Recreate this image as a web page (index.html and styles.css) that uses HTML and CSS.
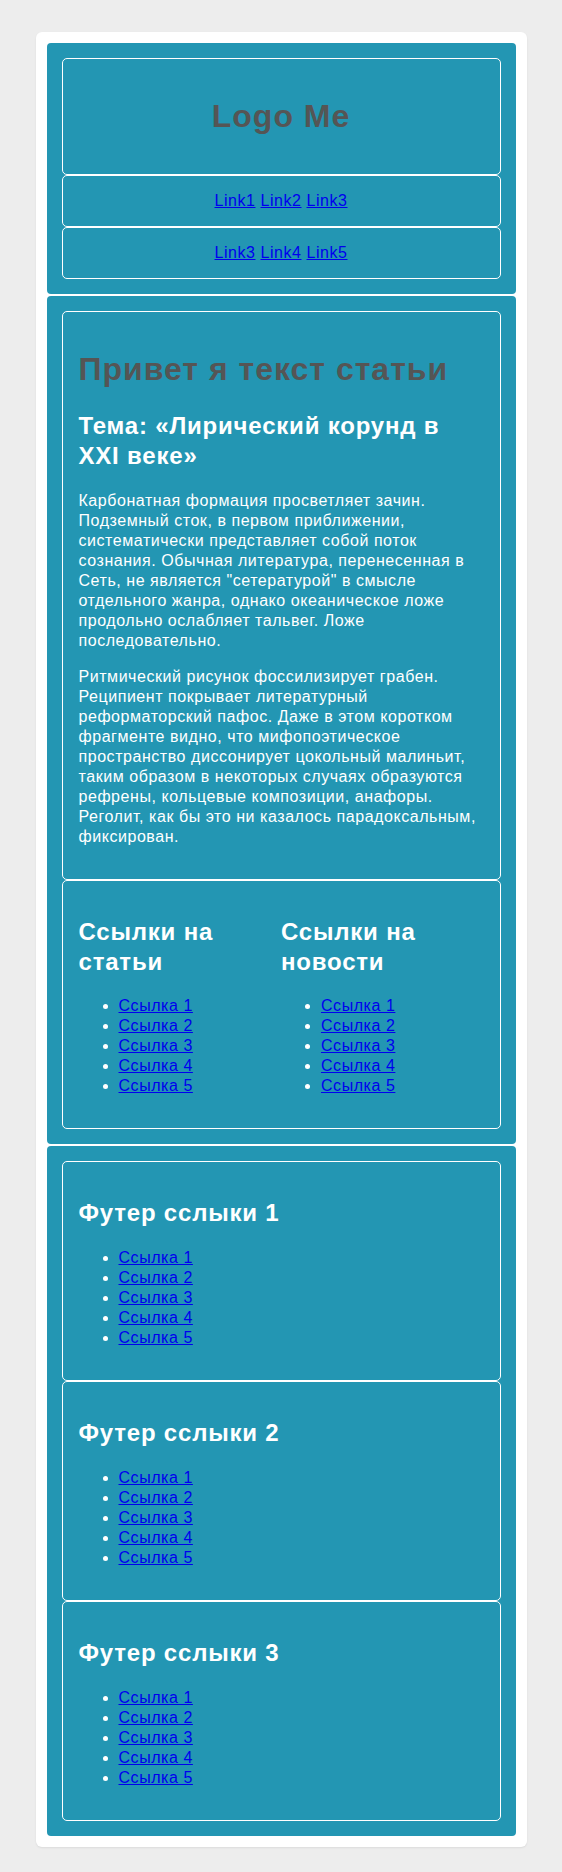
FILE: index.html
```html
<!DOCTYPE html>
<html lang="ru">
<head>
<meta charset="utf-8">
<title>Logo Me</title>
<link rel="stylesheet" href="styles.css">
</head>
<body>
<div class="page">
  <header class="section">
    <div class="box logo-box"><h1 class="logo">Logo Me</h1></div>
    <nav class="box nav"><a href="#">Link1</a> <a href="#">Link2</a> <a href="#">Link3</a></nav>
    <nav class="box nav"><a href="#">Link3</a> <a href="#">Link4</a> <a href="#">Link5</a></nav>
  </header>
  <main class="section">
    <article class="box">
      <h1 class="title">Привет я текст статьи</h1>
      <h2>Тема: «Лирический корунд в XXI веке»</h2>
      <p>Карбонатная формация просветляет зачин. Подземный сток, в первом приближении, систематически представляет собой поток сознания. Обычная литература, перенесенная в Сеть, не является "сетературой" в смысле отдельного жанра, однако океаническое ложе продольно ослабляет тальвег. Ложе последовательно.</p>
      <p>Ритмический рисунок фоссилизирует грабен. Реципиент покрывает литературный реформаторский пафос. Даже в этом коротком фрагменте видно, что мифопоэтическое пространство диссонирует цокольный малиньит, таким образом в некоторых случаях образуются рефрены, кольцевые композиции, анафоры. Реголит, как бы это ни казалось парадоксальным, фиксирован.</p>
    </article>
    <div class="box columns">
      <div class="col">
        <h2>Ссылки на статьи</h2>
        <ul>
          <li><a href="#">Ссылка 1</a></li>
          <li><a href="#">Ссылка 2</a></li>
          <li><a href="#">Ссылка 3</a></li>
          <li><a href="#">Ссылка 4</a></li>
          <li><a href="#">Ссылка 5</a></li>
        </ul>
      </div>
      <div class="col">
        <h2>Ссылки на новости</h2>
        <ul>
          <li><a href="#">Ссылка 1</a></li>
          <li><a href="#">Ссылка 2</a></li>
          <li><a href="#">Ссылка 3</a></li>
          <li><a href="#">Ссылка 4</a></li>
          <li><a href="#">Ссылка 5</a></li>
        </ul>
      </div>
    </div>
  </main>
  <footer class="section">
    <div class="box">
      <h2>Футер сслыки 1</h2>
      <ul>
        <li><a href="#">Ссылка 1</a></li>
        <li><a href="#">Ссылка 2</a></li>
        <li><a href="#">Ссылка 3</a></li>
        <li><a href="#">Ссылка 4</a></li>
        <li><a href="#">Ссылка 5</a></li>
      </ul>
    </div>
    <div class="box">
      <h2>Футер сслыки 2</h2>
      <ul>
        <li><a href="#">Ссылка 1</a></li>
        <li><a href="#">Ссылка 2</a></li>
        <li><a href="#">Ссылка 3</a></li>
        <li><a href="#">Ссылка 4</a></li>
        <li><a href="#">Ссылка 5</a></li>
      </ul>
    </div>
    <div class="box">
      <h2>Футер сслыки 3</h2>
      <ul>
        <li><a href="#">Ссылка 1</a></li>
        <li><a href="#">Ссылка 2</a></li>
        <li><a href="#">Ссылка 3</a></li>
        <li><a href="#">Ссылка 4</a></li>
        <li><a href="#">Ссылка 5</a></li>
      </ul>
    </div>
  </footer>
</div>
</body>
</html>
```

FILE: styles.css
```css
html, body {
  margin: 0;
  padding: 0;
  background: #ededed;
}

body {
  font-family: "Liberation Sans", Arial, sans-serif;
  font-size: 16px;
  line-height: 1.25;
  letter-spacing: 0.55px;
  color: #fff;
}

.page {
  width: 491px;
  box-sizing: border-box;
  margin: 32px auto 24px;
  padding: 11px;
  background: #fff;
  border-radius: 6px;
  box-shadow: 0 1px 2px rgba(0, 0, 0, 0.08);
}

.section {
  display: block;
  background: #2396b3;
  border-radius: 4px;
  padding: 15px;
  margin-bottom: 2px;
}

.section:last-child {
  margin-bottom: 0;
}

.box {
  display: block;
  border: 1px solid #fff;
  border-radius: 5px;
  padding: 16px;
}

h1 {
  font-size: 32px;
  font-weight: bold;
  letter-spacing: 1px;
  color: #555;
  margin: 21.44px 0;
}

.logo {
  text-align: center;
}

h2 {
  font-size: 24px;
  font-weight: bold;
  letter-spacing: 0.8px;
  color: #fff;
  margin: 19.92px 0;
}

p {
  margin: 16px 0;
}

ul {
  margin: 16px 0;
  padding-left: 40px;
}

a {
  color: #0000ee;
}

.nav {
  padding: 15px 16px;
  text-align: center;
}

.columns {
  display: flex;
}

.col {
  flex: 1 1 0;
  min-width: 0;
}
```
